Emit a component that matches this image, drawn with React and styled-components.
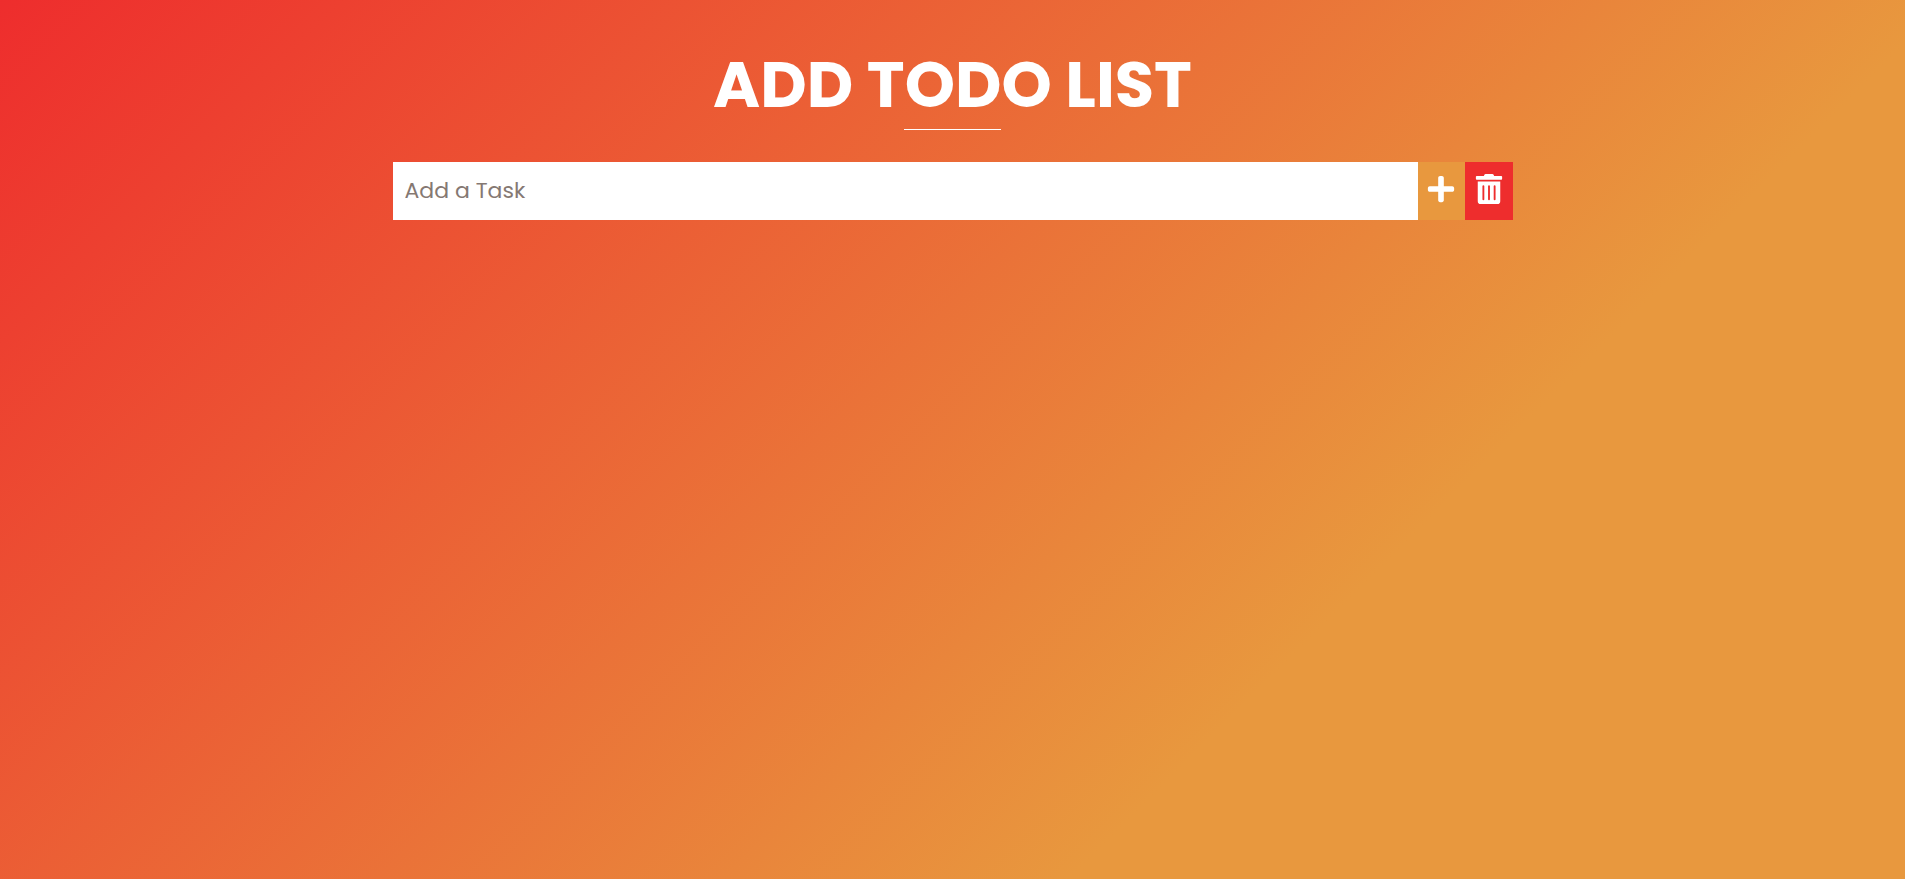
import React, { useState } from "react";
import styled, { createGlobalStyle } from "styled-components";
import { FaPlus, FaTrashAlt } from "react-icons/fa";

const GlobalStyle = createGlobalStyle`
  * { box-sizing: border-box; margin: 0; padding: 0; }
  body {
    min-height: 100vh;
    font-family: Poppins, Inter, "Liberation Sans", sans-serif;
    background: linear-gradient(135deg, #ee2d2d 0%, #e8983e 70%) no-repeat;
  }
`;

const Page = styled.main`
  display: flex;
  flex-direction: column;
  align-items: center;
  padding: 48px 24px;
`;

const Title = styled.h1`
  color: #fff;
  font-size: 64px;
  font-weight: 700;
  line-height: 74px;
  text-transform: uppercase;
  text-align: center;
`;

const Rule = styled.hr`
  width: 97px;
  height: 1px;
  margin: 7px 0 32px;
  border: 0;
  background: #fff;
`;

const TaskForm = styled.form`
  display: flex;
  width: 100%;
  max-width: 1120px;
  height: 58px;
`;

const TaskInput = styled.input`
  flex: 1;
  min-width: 0;
  padding: 0 12px 2px;
  border: 0;
  outline: 0;
  background: #fff;
  color: #222;
  font-family: inherit;
  font-size: 22px;
  &::placeholder { color: #857872; opacity: 1; }
`;

const IconButton = styled.button`
  display: flex;
  justify-content: center;
  width: ${(p) => (p.$danger ? 48 : 47)}px;
  padding-top: 12px;
  border: 0;
  background: ${(p) => (p.$danger ? "#ee2d2d" : "#e8983e")};
  color: #fff;
  font-size: 30px;
  cursor: pointer;
`;

const TaskList = styled.ul`
  width: 100%;
  max-width: 1120px;
  list-style: none;
  color: #fff;
  font-size: 22px;
`;

export default function App() {
  const [task, setTask] = useState("");
  const [tasks, setTasks] = useState([]);

  const addTask = (event) => {
    event.preventDefault();
    if (!task.trim()) return;
    setTasks([...tasks, task.trim()]);
    setTask("");
  };

  return (
    <>
      <GlobalStyle />
      <Page>
        <Title>Add Todo List</Title>
        <Rule />
        <TaskForm onSubmit={addTask}>
          <TaskInput
            type="text"
            aria-label="Add a Task"
            placeholder="Add a Task"
            value={task}
            onChange={(event) => setTask(event.target.value)}
          />
          <IconButton type="submit" aria-label="Add task">
            <FaPlus />
          </IconButton>
          <IconButton type="button" $danger aria-label="Delete all tasks" onClick={() => setTasks([])}>
            <FaTrashAlt />
          </IconButton>
        </TaskForm>
        {tasks.length > 0 && (
          <TaskList>
            {tasks.map((item, index) => (
              <li key={index}>{item}</li>
            ))}
          </TaskList>
        )}
      </Page>
    </>
  );
}
